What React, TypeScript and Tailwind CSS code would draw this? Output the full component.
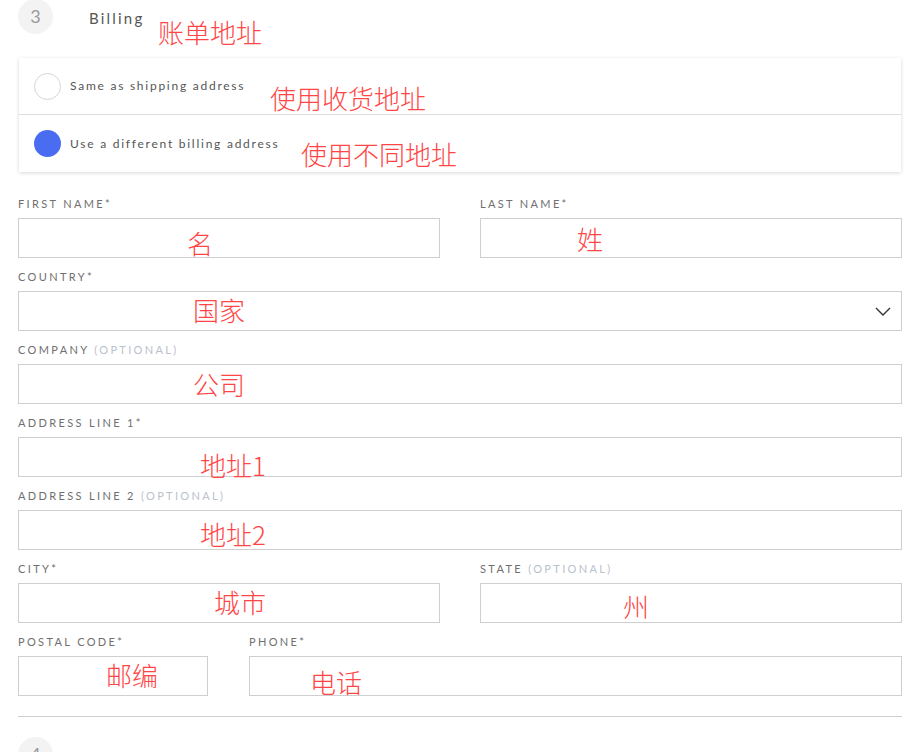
import React from 'react';

const note = "absolute text-[26px] leading-none font-extralight text-[#ff4545] [font-family:'Noto_Sans_CJK_SC',sans-serif]";

type FieldProps = {
    label: string;
    optional?: boolean;
    select?: boolean;
    className?: string;
};

const Field = ({ label, optional, select, className }: FieldProps) => (
    <div className={`flex flex-col ${className ?? ''}`}>
        <label className="mb-[7px] text-[11px] leading-[14px] tracking-[2.35px] text-[#6f6f6f] uppercase whitespace-nowrap">
            {label}
            {optional && <span className="text-[#b9c1cc]"> (Optional)</span>}
        </label>
        <div className="relative h-[40px] border border-[#cfcfcf] bg-white">
            {select && (
                <svg className="absolute right-[10px] top-[15px]" width="16" height="9" viewBox="0 0 16 9" fill="none">
                    <path d="M1 1l7 7 7-7" stroke="#333" strokeWidth="1.4" />
                </svg>
            )}
        </div>
    </div>
);

export default function App() {
    return (
        <div className="relative w-[909px] h-[752px] overflow-hidden bg-white pl-[18px] font-['Lato',sans-serif]">
            {/* step header */}
            <div className="flex items-start">
                <div className="mt-[-1px] flex h-[35px] w-[35px] items-center justify-center rounded-full bg-[#f3f3f3] text-[18px] text-[#9a9a9a]">
                    3
                </div>
                <div className="ml-[36px] mt-[7px] text-[15px] tracking-[2.2px] text-[#555]">Billing</div>
            </div>

            {/* billing choice card */}
            <div className="ml-[1px] mt-[24px] w-[882px] bg-white shadow-[0_1px_4px_rgba(0,0,0,0.16)]">
                <div className="flex h-[57px] items-center border-b border-[#dcdcdc] pl-[15px]">
                    <span className="h-[27px] w-[27px] rounded-full border border-[#d6d6d6]" />
                    <span className="ml-[9px] text-[12px] tracking-[1.75px] text-[#555]">Same as shipping address</span>
                </div>
                <div className="flex h-[57px] items-center pl-[15px]">
                    <span className="h-[27px] w-[27px] rounded-full bg-[#4a6cf0]" />
                    <span className="ml-[9px] text-[12px] tracking-[1.75px] text-[#555]">Use a different billing address</span>
                </div>
            </div>

            {/* form */}
            <div className="mt-[25px] flex w-[884px] flex-col gap-[12px]">
                <div className="grid grid-cols-2 gap-[40px]">
                    <Field label="First name*" />
                    <Field label="Last name*" />
                </div>
                <Field label="Country*" select />
                <Field label="Company" optional />
                <Field label="Address line 1*" />
                <Field label="Address line 2" optional />
                <div className="grid grid-cols-2 gap-[40px]">
                    <Field label="City*" />
                    <Field label="State" optional />
                </div>
                <div className="flex gap-[41px]">
                    <Field label="Postal code*" className="w-[190px]" />
                    <Field label="Phone*" className="flex-1" />
                </div>
            </div>

            <div className="mt-[20px] w-[884px] border-t border-[#d0d0d0]" />
            <div className="mt-[20px] flex h-[35px] w-[35px] items-center justify-center rounded-full bg-[#f3f3f3] text-[18px] text-[#9a9a9a]">
                4
            </div>

            {/* red annotations */}
            <span className={`${note} left-[158px] top-[19px]`}>账单地址</span>
            <span className={`${note} left-[270px] top-[85px]`}>使用收货地址</span>
            <span className={`${note} left-[301px] top-[141px]`}>使用不同地址</span>
            <span className={`${note} left-[187px] top-[230px]`}>名</span>
            <span className={`${note} left-[577px] top-[226px]`}>姓</span>
            <span className={`${note} left-[193px] top-[297px]`}>国家</span>
            <span className={`${note} left-[193px] top-[371px]`}>公司</span>
            <span className={`${note} left-[200px] top-[452px]`}>地址1</span>
            <span className={`${note} left-[200px] top-[521px]`}>地址2</span>
            <span className={`${note} left-[214px] top-[589px]`}>城市</span>
            <span className={`${note} left-[623px] top-[593px]`}>州</span>
            <span className={`${note} left-[106px] top-[662px]`}>邮编</span>
            <span className={`${note} left-[310px] top-[669px]`}>电话</span>
        </div>
    );
}
